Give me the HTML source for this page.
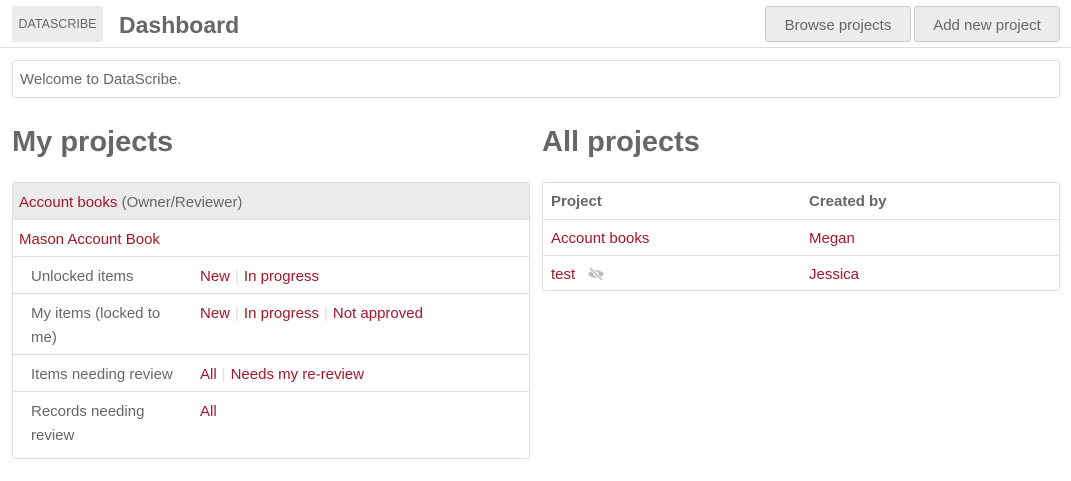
<!DOCTYPE html>
<html><head><meta charset="utf-8"><style>
*{box-sizing:border-box;margin:0;padding:0}
body{width:1071px;height:481px;background:#fff;font-family:"Liberation Sans",sans-serif;color:#676767;font-size:15px;position:relative;overflow:hidden}
.a{position:absolute}
.r{color:#a4162a}
.sep{color:#ddd;margin:0 5px}
.btn{position:absolute;top:6px;height:36px;background:#ececec;border:1px solid #cbcbcb;border-radius:3px;font-size:15px;line-height:37px;text-align:center;color:#676767}
.box{position:absolute;border:1px solid #dedede;border-radius:3px}
.row{position:absolute;left:0;right:0;border-top:1px solid #dedede}
h2{position:absolute;font-size:29px;font-weight:bold;color:#676767}
</style></head><body>
<div class="a" style="left:12px;top:6px;width:91px;height:36px;background:#ececec;font-size:12.5px;line-height:37px;text-align:center">DATASCRIBE</div>
<div class="a" style="left:119px;top:9px;font-size:23px;font-weight:bold;line-height:32px">Dashboard</div>
<div class="btn" style="left:765px;width:146px">Browse projects</div>
<div class="btn" style="left:914px;width:146px">Add new project</div>
<div class="a" style="left:0;right:0;top:47px;border-top:1px solid #dedede"></div>
<div class="box" style="left:12px;top:60px;width:1048px;height:38px;padding-left:7px;line-height:38px">Welcome to DataScribe.</div>
<h2 style="left:12px;top:126px">My projects</h2>
<h2 style="left:542px;top:126px">All projects</h2>
<div class="box" style="left:12px;top:182px;width:518px;height:277px">
 <div class="a" style="left:0;right:0;top:0;height:37px;background:#ebebeb;padding-left:6px;line-height:39px"><span class="r">Account books</span> (Owner/Reviewer)</div>
 <div class="row" style="top:36px;height:37px;padding-left:6px;line-height:39px"><span class="r">Mason Account Book</span></div>
 <div class="row" style="top:73px;height:37px;line-height:39px"><span class="a" style="left:18px">Unlocked items</span><span class="a" style="left:187px"><span class="r">New</span><span class="sep">|</span><span class="r">In progress</span></span></div>
 <div class="row" style="top:110px;height:61px;line-height:24px;padding-top:8px"><span class="a" style="left:18px;width:150px">My items (locked to me)</span><span class="a" style="left:187px"><span class="r">New</span><span class="sep">|</span><span class="r">In progress</span><span class="sep">|</span><span class="r">Not approved</span></span></div>
 <div class="row" style="top:171px;height:37px;line-height:39px"><span class="a" style="left:18px">Items needing review</span><span class="a" style="left:187px"><span class="r">All</span><span class="sep">|</span><span class="r">Needs my re-review</span></span></div>
 <div class="row" style="top:208px;height:68px;line-height:24px"><span class="a" style="left:18px;top:8px;width:130px">Records needing review</span><span class="a r" style="left:187px;top:8px">All</span></div>
</div>
<div class="box" style="left:542px;top:182px;width:518px;height:109px">
 <div class="a" style="left:0;right:0;top:0;height:36px;line-height:38px;font-weight:bold"><span class="a" style="left:8px">Project</span><span class="a" style="left:266px">Created by</span></div>
 <div class="row" style="top:36px;height:36px;line-height:38px"><span class="a r" style="left:8px">Account books</span><span class="a r" style="left:266px">Megan</span></div>
 <div class="row" style="top:72px;height:36px;line-height:38px"><span class="a r" style="left:8px">test</span>
 <svg class="a" style="left:44px;top:10px" width="18" height="16" viewBox="0 0 18 16"><path d="M1 8C4 3 14 3 17 8C14 13 4 13 1 8Z" fill="#bbb"/><circle cx="9" cy="8" r="2.5" fill="#fff"/><path d="M3 2L15 14" stroke="#fff" stroke-width="3"/><path d="M3 2L15 14" stroke="#bbb" stroke-width="1.5"/></svg>
 <span class="a r" style="left:266px">Jessica</span></div>
</div>
</body></html>
